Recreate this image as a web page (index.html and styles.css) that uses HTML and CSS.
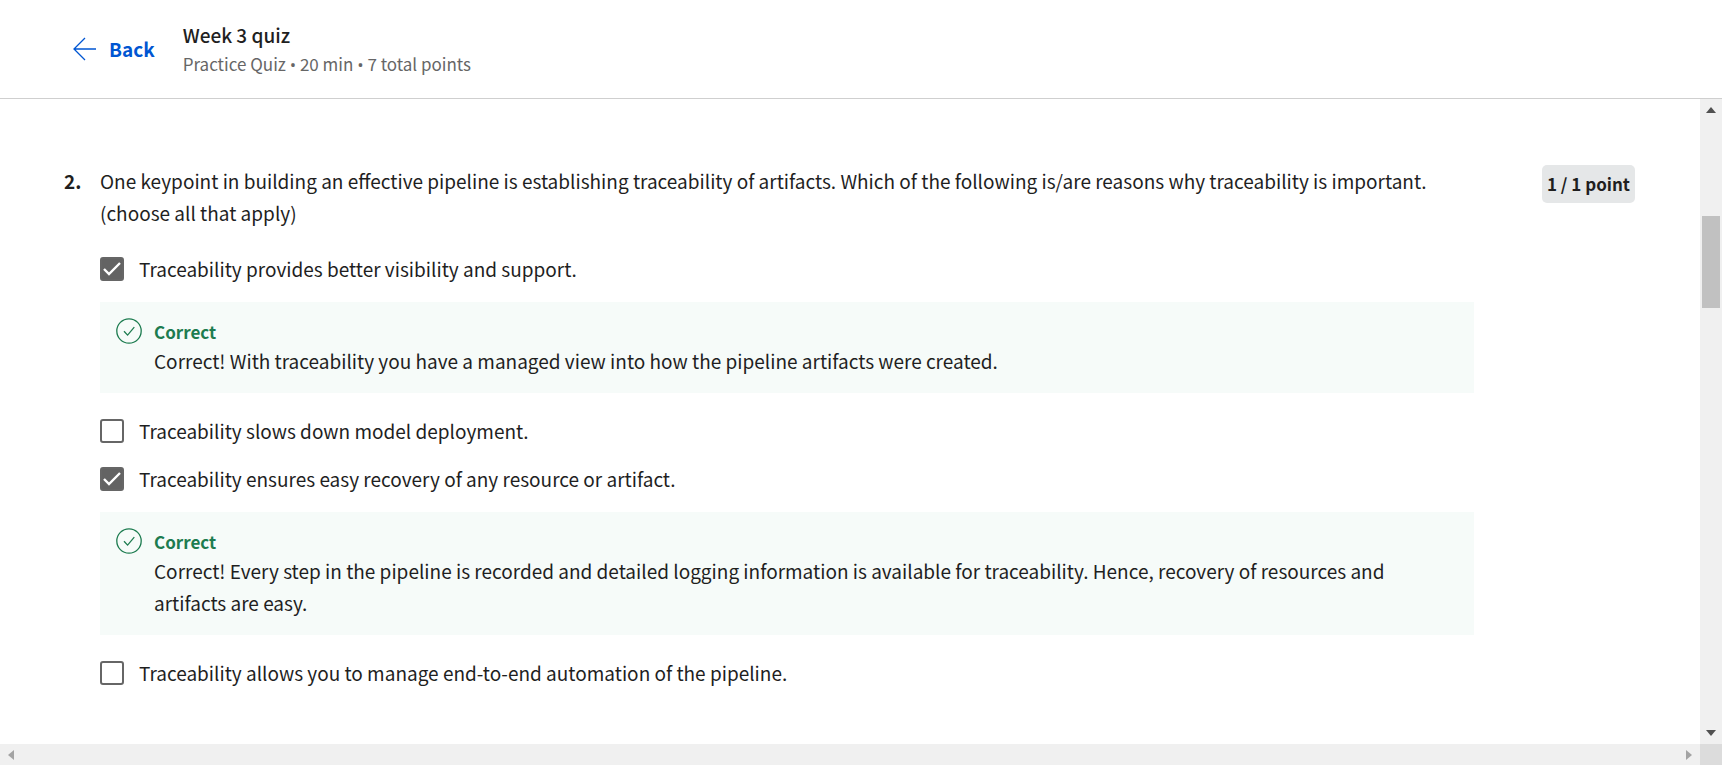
FILE: index.html
```html
<!DOCTYPE html>
<html lang="en">
<head>
<meta charset="utf-8">
<meta name="viewport" content="width=device-width, initial-scale=1">
<title>Week 3 quiz</title>
<link rel="stylesheet" href="styles.css">
</head>
<body>
<header class="topbar">
  <a class="back" href="#">
    <svg class="back-icon" viewBox="0 0 24 24" aria-hidden="true"><path d="M23 12H1M12 1L1 12l11 11"/></svg>
    Back
  </a>
  <div class="heading">
    <h1 class="title">Week 3 quiz</h1>
    <p class="meta">Practice Quiz <span class="dot">•</span> 20 min <span class="dot">•</span> 7 total points</p>
  </div>
</header>
<div class="viewport">
  <main class="content">
    <section class="question">
      <span class="number">2.</span>
      <div class="body">
        <p class="prompt" id="prompt">One keypoint in building an effective pipeline is establishing traceability of artifacts. Which of the following is/are reasons why traceability is important. (choose all that apply)</p>
        <div class="options" role="group" aria-labelledby="prompt">
          <label class="option"><input class="box" type="checkbox" checked>Traceability provides better visibility and support.</label>
          <div class="feedback">
            <svg class="feedback-icon" viewBox="0 0 26 26" aria-hidden="true"><circle cx="13" cy="13" r="12.2"/><path d="M8 13.2l3.6 3.9 6.7-8"/></svg>
            <div class="feedback-text">
              <strong class="verdict">Correct</strong>
              <p class="reason">Correct! With traceability you have a managed view into how the pipeline artifacts were created.</p>
            </div>
          </div>
          <label class="option"><input class="box" type="checkbox">Traceability slows down model deployment.</label>
          <label class="option"><input class="box" type="checkbox" checked>Traceability ensures easy recovery of any resource or artifact.</label>
          <div class="feedback">
            <svg class="feedback-icon" viewBox="0 0 26 26" aria-hidden="true"><circle cx="13" cy="13" r="12.2"/><path d="M8 13.2l3.6 3.9 6.7-8"/></svg>
            <div class="feedback-text">
              <strong class="verdict">Correct</strong>
              <p class="reason">Correct! Every step in the pipeline is recorded and detailed logging information is available for traceability. Hence, recovery of resources and artifacts are easy.</p>
            </div>
          </div>
          <label class="option"><input class="box" type="checkbox">Traceability allows you to manage end-to-end automation of the pipeline.</label>
        </div>
      </div>
      <span class="points">1 / 1 point</span>
    </section>
  </main>
  <div class="scroll-v" aria-hidden="true">
    <svg class="arrow-v" viewBox="0 0 10 6"><path d="M0 6L5 0l5 6z"/></svg>
    <div class="track"><div class="thumb"></div></div>
    <svg class="arrow-v" viewBox="0 0 10 6"><path d="M0 0h10L5 6z"/></svg>
  </div>
  <div class="scroll-h" aria-hidden="true">
    <svg class="arrow-h" viewBox="0 0 6 10"><path d="M6 0v10L0 5z"/></svg>
    <svg class="arrow-h" viewBox="0 0 6 10"><path d="M0 0v10l6-5z"/></svg>
  </div>
  <div class="corner"></div>
</div>
</body>
</html>
```
FILE: styles.css
```css
* { box-sizing: border-box; }

body {
  margin: 0;
  height: 100vh;
  display: flex;
  flex-direction: column;
  overflow: hidden;
  background: #fff;
  color: #1f1f1f;
  font-family: "Noto Sans CJK SC", "Open Sans", sans-serif;
  font-size: 19px;
  line-height: 32px;
}

h1, p { margin: 0; }

.topbar {
  display: flex;
  align-items: center;
  gap: 28px;
  padding: 19px 73px 20px;
  border-bottom: 1px solid #cfcfcf;
}

.back {
  display: flex;
  align-items: center;
  gap: 12px;
  color: #0056d2;
  font-weight: 700;
  text-decoration: none;
}

.back-icon {
  width: 24px;
  height: 24px;
  fill: none;
  stroke: #0056d2;
  stroke-width: 1.3;
}

.title {
  font-size: 19px;
  font-weight: 500;
  line-height: 31px;
}

.meta {
  color: #666;
  font-size: 17px;
  line-height: 28px;
}

.dot {
  font-family: "Open Sans", sans-serif;
  line-height: 1;
}

.viewport {
  flex: 1;
  min-height: 0;
  display: grid;
  grid-template-columns: minmax(0, 1fr) 22px;
  grid-template-rows: minmax(0, 1fr) 21px;
}

.content {
  overflow: hidden;
  padding: 66px 65px 0 64px;
}

.question {
  display: flex;
  align-items: flex-start;
}

.number {
  width: 36px;
  flex: none;
  font-weight: 700;
}

.body {
  flex: 1;
  margin-right: 68px;
}

.options {
  display: flex;
  flex-direction: column;
  margin-top: 16px;
}

.option {
  display: flex;
  align-items: center;
  gap: 15px;
  min-height: 48px;
}

.box {
  appearance: none;
  flex: none;
  width: 24px;
  height: 24px;
  margin: 0;
  border: 2px solid #666;
  border-radius: 3px;
  background: #fff;
}

.box:checked {
  background: #636363 url("data:image/svg+xml,%3Csvg xmlns='http://www.w3.org/2000/svg' viewBox='0 0 20 20'%3E%3Cpath d='M2 10l5 5L18 4' fill='none' stroke='white' stroke-width='2.4'/%3E%3C/svg%3E") center / 20px no-repeat;
}

.feedback {
  display: flex;
  gap: 12px;
  margin: 9px 0 14px;
  padding: 16px;
  background: #f6fbf9;
}

.feedback-icon {
  flex: none;
  width: 26px;
  height: 26px;
  fill: none;
  stroke: #1d7c50;
  stroke-width: 1.3;
}

.verdict {
  display: block;
  color: #1d7c50;
  font-size: 17px;
  line-height: 27px;
}

.points {
  flex: none;
  padding: 3px 5px;
  border-radius: 5px;
  background: #e5e7e8;
  font-size: 17px;
  font-weight: 700;
}

.scroll-v {
  display: flex;
  flex-direction: column;
  align-items: center;
  padding: 8px 0;
  background: #f0f0f0;
}

.arrow-v {
  flex: none;
  width: 10px;
  height: 6px;
  fill: #505050;
}

.track {
  flex: 1;
  width: 18px;
  padding-top: 103px;
}

.thumb {
  height: 92px;
  background: #c1c1c1;
}

.scroll-h {
  display: flex;
  align-items: center;
  justify-content: space-between;
  padding: 0 8px;
  background: #f0f0f0;
}

.arrow-h {
  width: 6px;
  height: 10px;
  fill: #a3a3a3;
}

.corner { background: #dcdcdc; }
```
